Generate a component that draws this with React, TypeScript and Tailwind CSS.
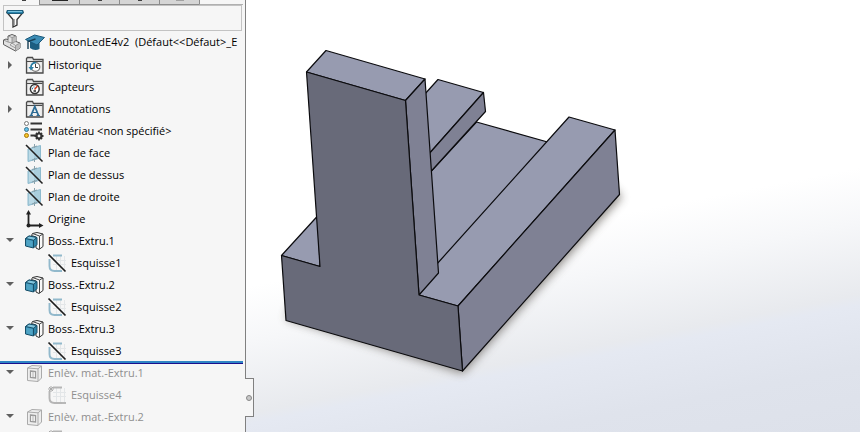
import type { ReactNode } from "react";

type IconName =
  | "history"
  | "sensors"
  | "annotations"
  | "material"
  | "plane"
  | "origin"
  | "boss"
  | "sketch"
  | "cut"
  | "sketchOff";

type TreeItem = {
  label?: string;
  icon: IconName;
  arrow?: "open" | "closed";
  child?: boolean;
  off?: boolean;
  rollback?: boolean;
};

const items: TreeItem[] = [
  { label: "Historique", icon: "history", arrow: "closed" },
  { label: "Capteurs", icon: "sensors" },
  { label: "Annotations", icon: "annotations", arrow: "closed" },
  { label: "Matériau <non spécifié>", icon: "material" },
  { label: "Plan de face", icon: "plane" },
  { label: "Plan de dessus", icon: "plane" },
  { label: "Plan de droite", icon: "plane" },
  { label: "Origine", icon: "origin" },
  { label: "Boss.-Extru.1", icon: "boss", arrow: "open" },
  { label: "Esquisse1", icon: "sketch", child: true },
  { label: "Boss.-Extru.2", icon: "boss", arrow: "open" },
  { label: "Esquisse2", icon: "sketch", child: true },
  { label: "Boss.-Extru.3", icon: "boss", arrow: "open" },
  { label: "Esquisse3", icon: "sketch", child: true, rollback: true },
  { label: "Enlèv. mat.-Extru.1", icon: "cut", arrow: "open", off: true },
  { label: "Esquisse4", icon: "sketchOff", child: true, off: true },
  { label: "Enlèv. mat.-Extru.2", icon: "cut", arrow: "open", off: true },
  { icon: "sketchOff", child: true, off: true },
];

const Folder = ({ children }: { children: ReactNode }) => (
  <>
    <path d="M1.500 17v-14.500l1-1h5l1 2h9.500V17z" fill="#e4e4e4" stroke="#4a4a4a" strokeWidth="1.300" />
    <path d="M2 5.500h15.500" stroke="#4a4a4a" />
    <path d="M3 6.500h13.500V16H3z" fill="#f0f0f0" />
    {children}
  </>
);

const SketchCurve = ({ color }: { color: string }) => (
  <>
    <path d="M5 6.500h13M5 10.500h13M8.500 2v14M12.500 2v14M16.500 2v14" stroke="#e3e6e8" />
    <path d="M5 1.500h9M1.500 5v7q0 5 5 5H14" fill="none" stroke={color} strokeWidth="1.900" />
  </>
);

const icons: Record<IconName, ReactNode> = {
  history: (
    <Folder>
      <circle cx="10.500" cy="11" r="4.300" fill="#fff" stroke="#777" strokeWidth="1.200" />
      <path d="M10.500 8v3.500H13" fill="none" stroke="#444" />
      <path d="M6 11.500a4.400 4.400 0 0 1 5-4.800" fill="none" stroke="#2b7fa6" strokeWidth="1.700" />
      <path d="M3.500 11l2.500 3.500L9 11z" fill="#2b7fa6" />
    </Folder>
  ),
  sensors: (
    <Folder>
      <circle cx="9.800" cy="11" r="4.400" fill="#fff" stroke="#333" strokeWidth="1.500" />
      <path d="M9.500 11.500L12.500 8" stroke="#d33a1a" strokeWidth="1.500" />
      <path d="M7 10.500h1M9 8.500v1" stroke="#2b7fa6" strokeWidth="1.300" />
      <path d="M8.500 13h2.500" stroke="#333" strokeWidth="1.600" />
    </Folder>
  ),
  annotations: (
    <Folder>
      <path d="M6 15.500L9.800 6.500l3.700 9" fill="none" stroke="#2c6b94" strokeWidth="1.800" />
      <path d="M7.500 12.500h4.500M4.500 15.500H8M11.500 15.500H15" stroke="#2c6b94" strokeWidth="1.200" />
    </Folder>
  ),
  material: (
    <>
      <path d="M5.500 1.500H17M5.500 7.500H17M5.500 13.500H11" stroke="#333" strokeWidth="1.800" />
      <circle cx="1.500" cy="1.500" r="2" fill="#fff" stroke="#777" />
      <circle cx="1.500" cy="7.500" r="2" fill="#61bfe8" stroke="#3d7891" />
      <circle cx="1.500" cy="13.500" r="2" fill="#f5c529" stroke="#a8770b" />
      <circle cx="14" cy="14" r="2.500" fill="#f6f6f6" stroke="#333" strokeWidth="2.200" />
      <path d="M14 9.500v2M14 16.500v2M9.500 14h2M16.500 14h2M11 11l1.300 1.300M15.700 15.700l1.300 1.300M17 11l-1.300 1.300M12.300 15.700L11 17" stroke="#333" strokeWidth="1.800" />
    </>
  ),
  plane: (
    <>
      <path d="M3 5L15.500 1.500V14L3 17.500z" fill="#a9cedd" stroke="#8dbace" />
      <path d="M4 6l5-1.500v10L4 16z" fill="#bcdae6" />
      <path d="M9.500 0v4M9.500 14v4M7 3.500l5-1.500M7 16l5-1.500" stroke="#8aa3ad" />
      <path d="M1 1l16.500 16.500" stroke="#222" strokeWidth="1.600" />
    </>
  ),
  origin: (
    <>
      <path d="M3.500 3v12.500H15" fill="none" stroke="#222" strokeWidth="1.800" />
      <path d="M3.500 0L6 4.500H1zM18.500 15.500L14 13v5z" fill="#222" />
      <circle cx="3.500" cy="15.500" r="2" fill="#222" />
    </>
  ),
  boss: (
    <>
      <path d="M6.500 3.500L7.500 1.500 12 .5l6 1.500V14.500L14 17.500 11 16V5z" fill="#f8f8f8" stroke="#333" strokeLinejoin="round" />
      <path d="M7.500 1.500L14.500 4 18 2M14.500 4v13" fill="none" stroke="#444" strokeLinejoin="round" />
      <path d="M.5 6.500L4 4l8 1.500V12.500L8.500 16 .5 14z" fill="#2e86ab" stroke="#174e68" strokeLinejoin="round" />
      <path d="M.5 6.500l8 1.700L12 5.500 4 4z" fill="#82c6df" stroke="#174e68" strokeLinejoin="round" />
      <path d="M8.500 8.200V16" stroke="#174e68" />
      <path d="M1.200 7.500l6.500 1.400v6l-6.500-1.500z" fill="#4fa3c4" />
    </>
  ),
  sketch: (
    <>
      <SketchCurve color="#92b9cc" />
      <path d="M.5.5L17.500 17.500" stroke="#1c1c1c" strokeWidth="1.700" />
    </>
  ),
  cut: (
    <>
      <path d="M2.500 4L7 1.500l9.500.5v12L13 17.500l-10.500-1z" fill="#eee" stroke="#aaa" strokeLinejoin="round" />
      <path d="M2.500 4l10.500.8v12.700M13 4.800L16.500 2" fill="none" stroke="#aaa" />
      <path d="M5.500 7l5 .5v6.500l-5-.5z" fill="#fff" stroke="#999" strokeWidth="1.300" />
      <path d="M8 7.500v6" stroke="#aaa" />
    </>
  ),
  sketchOff: (
    <>
      <SketchCurve color="#b5b5b5" />
      <path d="M14 17h4" stroke="#b5b5b5" strokeWidth="1.900" />
      <path d="M3 0v6M0 3h6M1 1l4 4M5 1L1 5" stroke="#aaa" />
    </>
  ),
};

const Icon = ({ name }: { name: IconName }) => (
  <svg viewBox="0 0 19 19" className="size-[19px] shrink-0 overflow-visible" aria-hidden="true">
    {icons[name]}
  </svg>
);

const Arrow = ({ item }: { item: TreeItem }) => (
  <button
    type="button"
    aria-label={`Développer ${item.label}`}
    aria-expanded={item.arrow === "open"}
    className="flex size-4 items-center justify-center"
  >
    <svg viewBox="0 0 8 8" className="size-2" aria-hidden="true">
      <path d={item.arrow === "open" ? "M0 1h8L4 5z" : "M2 0v8l4-4z"} fill="#606060" />
    </svg>
  </button>
);

const Tabs = () => (
  <div className="flex h-[5px] shrink-0 overflow-hidden pr-0.5" role="tablist">
    <button type="button" role="tab" aria-selected="true" aria-label="Arbre" className="flex w-[39px] items-start justify-center pl-2">
      <span className="h-px w-1 bg-neutral-700" />
    </button>
    {["bg-neutral-800 w-4", "bg-neutral-700 w-1", "bg-neutral-700 w-1", "bg-neutral-400 w-2"].map((mark, i) => (
      <button
        key={i}
        type="button"
        role="tab"
        aria-selected="false"
        aria-label={`Onglet ${i + 2}`}
        className="flex w-10 items-start justify-center border-b border-l border-[#8c8c8c] bg-[#d5d5d5]"
      >
        <span className={`h-px ${mark}`} />
      </button>
    ))}
    <div className="flex-1 border-b border-l border-[#b0b0b0] border-l-[#8c8c8c]" />
  </div>
);

const FeatureTree = () => (
  <aside className="relative w-[246px] shrink-0 border-r border-[#808080] bg-[#f6f6f6]">
    <div className="flex h-full flex-col overflow-hidden">
      <Tabs />
      <label className="mx-[3px] flex h-[26px] shrink-0 items-center border border-[#c3c3c3] pl-0.5">
        <svg viewBox="0 0 18 19" className="h-[19px] w-[18px] shrink-0" aria-hidden="true">
          <path d="M1 3.500l6 7V18l4-2v-5.500l6-7z" fill="#fafafa" stroke="#333" strokeWidth="1.300" />
          <path d="M8.500 10v6.500" stroke="#aaa" />
          <path d="M1 1.500h16v3H1z" fill="#2a86ae" stroke="#1d5e7d" />
          <path d="M2 2.500h14" stroke="#7cc3df" />
        </svg>
        <input type="text" aria-label="Filtrer" className="min-w-0 flex-1 bg-transparent px-1 outline-none" />
      </label>
      <div className="mr-0.5 flex h-[23px] shrink-0 items-center overflow-hidden pl-[3px] whitespace-pre">
        <svg viewBox="0 0 18 18" className="size-[18px] shrink-0" aria-hidden="true">
          <path
            d="M.5 6L3 5l2 .7V2L9 .5 13 2v5.500L17 9v5l-4.500 3L.5 10.500z"
            fill="#e2e2e2"
            stroke="#5c5c5c"
            strokeLinejoin="round"
          />
          <path d="M9 3.500V9l4-1.500V2zM12.500 11.500V17l4.500-3V9z" fill="#bdbdbd" />
          <path d="M5 2l4 1.500L13 2M9 3.500V9l4-1.500M5 5.700V8l4 1-2 2 5.500 3M.5 6L5 8M12.500 17v-5.500L9 9M12.500 11.500L17 9" fill="none" stroke="#8a8a8a" strokeWidth=".8" />
        </svg>
        <svg viewBox="0 0 20 18" className="ml-1 h-[18px] w-5 shrink-0" aria-hidden="true">
          <path d="M5 8v6q4.500 3.500 9.500 1V8z" fill="#1c5e80" />
          <path d="M.5 5.500L9.500 1 19.500 3.500 12 11z" fill="#3a8bb4" stroke="#1b587a" strokeLinejoin="round" />
          <path d="M10.500 5L3 7.500V15" fill="none" stroke="#173f55" strokeWidth="1.400" />
        </svg>
        <span className="ml-1">boutonLedE4v2  (Défaut&lt;&lt;Défaut&gt;_E</span>
      </div>
      <ul className="min-h-0 flex-1 overflow-hidden">
        {items.map((item, i) => (
          <li
            key={i}
            className={`relative flex h-[22px] items-center ${item.off ? "text-[#8f8f8f]" : "text-black"}`}
          >
            <span className={`shrink-0 pl-0.5 ${item.child ? "w-12" : "w-[25px]"}`}>
              {item.arrow && <Arrow item={item} />}
            </span>
            <Icon name={item.icon} />
            {item.label && <span className="ml-1 whitespace-nowrap">{item.label}</span>}
            {item.rollback && (
              <span className="absolute top-[21px] right-0.5 left-0 z-10 h-[3px] border-b border-[#1a0f8f] bg-[#2f86c4]" />
            )}
          </li>
        ))}
      </ul>
    </div>
    <button
      type="button"
      aria-label="Masquer l'arbre"
      className="absolute top-[378px] -right-[9px] z-10 flex h-[39px] w-[9px] items-center justify-center border border-l-0 border-[#808080] bg-[#f6f6f6]"
    >
      <span className="size-1.5 shrink-0 rounded-full border border-[#888] bg-[#c8c8c8]" />
    </button>
  </aside>
);

const Model = () => (
  <svg viewBox="246 0 614 432" preserveAspectRatio="xMinYMin meet" className="size-full" role="img" aria-label="Pièce 3D">
    <defs>
      <filter id="soft" x="-20%" y="-20%" width="140%" height="140%">
        <feGaussianBlur stdDeviation="5" />
      </filter>
    </defs>
    <path d="M290 317L462 370 618 197 600 180 450 300 300 290z" fill="#55504a" stroke="#55504a" strokeWidth="6" opacity=".65" filter="url(#soft)" />
    <g stroke="#0b0b0e" strokeWidth="1.200" strokeLinejoin="round">
      <g fill="#979bb0">
        <path d="M476.500 122L560 145.500 450 263 436 272 430 172.500z" />
        <path d="M424 95L438 79.500 483.500 92.500 428 155z" />
      </g>
      <path d="M483.500 92.500L485.500 111.500 430 172.500 428 155z" fill="#7f8194" />
      <g fill="#979bb0">
        <path d="M569 117L615 130 458 306 419 295 436 272 436 265z" />
        <path d="M281.500 255.500L318 215.500 320 266.500z" />
        <path d="M306.500 72L326 50.500 425 79 405.500 100.500z" />
      </g>
      <g fill="#7f8194">
        <path d="M615 130L619.500 194.500 462.500 371 458 306z" />
        <path d="M405.500 100.500L425 79 438.500 273 419 295z" />
      </g>
      <path
        d="M306.500 72L405.500 100.500 419 295 458 306 462.500 371 286 320.500 281.500 255.500 320 266.500z"
        fill="#686a79"
      />
    </g>
  </svg>
);

const App = () => {
  return (
    <div className="flex h-screen overflow-hidden bg-white font-['Open_Sans','Noto_Sans',sans-serif] text-[11px] text-black">
      <FeatureTree />
      <main className="min-w-0 flex-1 bg-[linear-gradient(169deg,#ffffff_52%,#f6f7f9_62%,#e8eaee_75%,#e5e9f2_77%,#dfe3ec_88%,#dde1ea_100%)]">
        <Model />
      </main>
    </div>
  );
};

export default App;
